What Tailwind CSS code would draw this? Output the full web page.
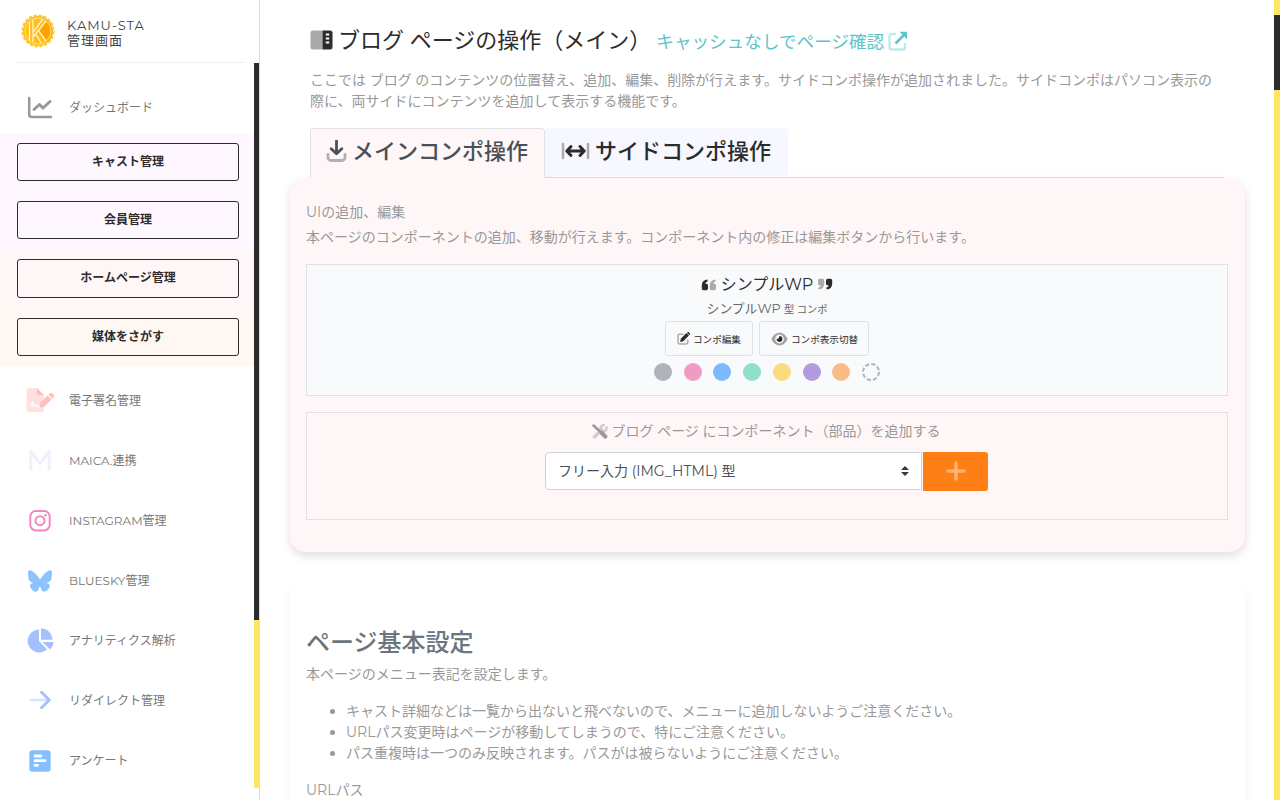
<!DOCTYPE html>
<html lang="ja">
<head>
  <meta charset="UTF-8">
  <meta name="viewport" content="width=device-width, initial-scale=1">
  <title>KAMU-STA 管理画面</title>
  <script src="https://cdn.jsdelivr.net/npm/@tailwindcss/browser@4"></script>
</head>
<body class="flex h-screen overflow-hidden bg-white font-[Montserrat,Inter,'Noto_Sans_CJK_JP',sans-serif] text-sm leading-[21px] text-[#999]">

  <!-- Sidebar -->
  <aside class="relative h-full w-[260px] shrink-0 overflow-hidden border-r border-[#ddd] bg-white">
    <div class="mr-[15px] ml-[15px] flex h-[63px] items-center gap-3 border-b border-[#eee] pl-[6px]">
      <svg class="h-[34px] w-[34px] shrink-0" viewBox="0 0 34 34">
        <circle cx="17" cy="17" r="15.600" fill="none" stroke="#ffcf3d" stroke-width="2" stroke-dasharray="3.400 1.500"/>
        <circle cx="17" cy="17" r="15" fill="#ffbd1c"/>
        <path d="M18 17L26 6a14 14 0 0 1 0 22Z" fill="#ffa200"/>
        <circle cx="17" cy="17" r="13" fill="none" stroke="#ffe58a" stroke-width="1"/>
        <path d="M8.500 8v18.500M12 6v22M12 18.500L21.500 5.500M12.500 22.500L25 7M14.500 19.500l5.500 9.500M17.500 16.500l7.500 10.500" fill="none" stroke="#fff3bf" stroke-width="1.400"/>
      </svg>
      <div class="pt-[3px] text-[13px] leading-[15px] tracking-[1px] text-[#444]">
        <div>KAMU-STA</div>
        <div>管理画面</div>
      </div>
    </div>

    <nav class="text-xs text-[#777]">
      <a class="mt-[14px] flex h-[60px] items-center gap-[15px] pl-[26px]">
        <svg class="mt-[2px] h-7 w-7" viewBox="0 0 28 28" fill="none" stroke="#999" stroke-width="2.500" stroke-linecap="round" stroke-linejoin="round">
          <path d="M3.200 4v16.500q0 2.500 2.500 2.500H25"/>
          <path d="M8 15.500l5.500-5 3.500 3.500L24 7.500" stroke-width="3"/>
        </svg>
        <span class="mt-[2px]">ダッシュボード</span>
      </a>

      <div class="mt-[-4px] font-bold text-[#2c2c2c]">
        <div class="h-[117px] bg-[#fef7ff] px-[17px] pt-[10px]">
          <button class="block h-[38px] w-[222px] rounded-[3px] border border-[#2c2c2c] font-bold">キャスト管理</button>
          <button class="mt-5 block h-[38px] w-[222px] rounded-[3px] border border-[#2c2c2c] font-bold">会員管理</button>
        </div>
        <div class="h-[58px] bg-[#fff6f7] px-[17px] pt-[9px]">
          <button class="block h-[39px] w-[222px] rounded-[3px] border border-[#2c2c2c] pb-px font-bold">ホームページ管理</button>
        </div>
        <div class="h-[58px] bg-[#fff7f2] px-[17px] pt-[10px]">
          <button class="block h-[38px] w-[222px] rounded-[3px] border border-[#2c2c2c] font-bold">媒体をさがす</button>
        </div>
      </div>

      <a class="mt-[4px] flex h-[60px] items-center gap-[15px] pl-[26px]">
        <svg class="h-7 w-7" viewBox="0 0 28 28">
          <path d="M3.500 2H11l7 7v14a3 3 0 0 1-3 3H3.500a3 3 0 0 1-3-3V5a3 3 0 0 1 3-3Z" fill="#ffdfdf"/>
          <path d="M11 2l7 7h-5.500a1.500 1.500 0 0 1-1.500-1.500Z" fill="#ffbfbf"/>
          <path d="M14.500 16.500l7-7 4 4-7 7-5 1Z" fill="#ffbfbf"/>
          <path d="M22.500 8.500l.500-.500a2.600 2.600 0 0 1 4 4l-.700.700Z" fill="#ffbfbf"/>
          <path d="M4 20.500l2.500-4 1 4 2.500-2 1 2h3" fill="none" stroke="#fff" stroke-width="1.300"/>
        </svg>
        <span class="mt-[2px]">電子署名管理</span>
      </a>
      <a class="flex h-[60px] items-center gap-[15px] pl-[26px]">
        <svg class="h-7 w-7" viewBox="0 0 28 28" fill="none" stroke="#f1f0ff" stroke-width="3.200" stroke-linecap="round" stroke-linejoin="round">
          <path d="M4.800 23.500V5.500L14 17.500l9.200-12v18"/>
        </svg>
        <span class="mt-[2px]">MAICA.連携</span>
      </a>
      <a class="flex h-[60px] items-center gap-[15px] pl-[26px]">
        <svg class="h-7 w-7" viewBox="0 0 28 28" fill="none" stroke="#f288bd" stroke-width="2">
          <rect x="4.300" y="5" width="19.400" height="19.400" rx="5.500"/>
          <circle cx="14" cy="14.700" r="4.500"/>
          <circle cx="19.500" cy="9.200" r="1.300" fill="#f288bd" stroke="none"/>
        </svg>
        <span class="mt-[2px]">INSTAGRAM管理</span>
      </a>
      <a class="flex h-[60px] items-center gap-[15px] pl-[26px]">
        <svg class="mt-[2px] h-7 w-7 p-[2px]" viewBox="0 0 24 24" fill="#8cc2ff">
          <path d="M12 10.800c-1.087-2.114-4.046-6.053-6.798-7.995C2.566.944 1.561 1.266.902 1.565.139 1.908 0 3.080 0 3.768c0 .69.378 5.650.624 6.479.815 2.736 3.713 3.660 6.383 3.364-3.912.58-7.387 2.005-2.830 7.078 5.013 5.190 6.870-1.113 7.823-4.308.953 3.195 2.050 9.271 7.733 4.308 4.267-4.308 1.172-6.498-2.740-7.078 2.670.297 5.568-.628 6.383-3.364.246-.828.624-5.790.624-6.478 0-.69-.139-1.861-.902-2.206-.659-.298-1.664-.62-4.300 1.240C16.046 4.748 13.087 8.687 12 10.800Z"/>
        </svg>
        <span class="mt-[2px]">BLUESKY管理</span>
      </a>
      <a class="flex h-[60px] items-center gap-[15px] pl-[26px]">
        <svg class="h-7 w-7" viewBox="0 0 28 28" fill="#a5c0ff">
          <path d="M13 3.600V15l8 8.200A11.400 11.400 0 1 1 13 3.600Z"/>
          <path d="M15 2.600A11.500 11.500 0 0 1 26.500 13.700H15Z"/>
          <path d="M16.500 16h11.200a11.500 11.500 0 0 1-3.700 7.500Z"/>
        </svg>
        <span class="mt-[2px]">アナリティクス解析</span>
      </a>
      <a class="flex h-[60px] items-center gap-[15px] pl-[26px]">
        <svg class="h-7 w-7" viewBox="0 0 28 28" fill="none" stroke-linecap="round" stroke-linejoin="round" stroke-width="2.800">
          <path d="M5 14h18" stroke="#d6e2ff" stroke-width="2.500"/>
          <path d="M15.500 6.200L23.300 14l-7.800 7.800" stroke="#a5c0ff"/>
        </svg>
        <span class="mt-[2px]">リダイレクト管理</span>
      </a>
      <a class="flex h-[60px] items-center gap-[15px] pl-[26px]">
        <svg class="h-7 w-7" viewBox="0 0 28 28">
          <rect x="3.300" y="4.300" width="21.400" height="21.400" rx="3" fill="#85bfff"/>
          <path d="M9 10h6M9 14.700h10M9 19.300h2.500" stroke="#fff" stroke-width="2.800" stroke-linecap="round"/>
        </svg>
        <span class="mt-[2px]">アンケート</span>
      </a>
    </nav>

    <!-- Sidebar scrollbar -->
    <div class="absolute top-[63px] -right-px h-[725px] w-[6px] bg-[#ffe564]">
      <div class="h-[557px] bg-[#2c2c2c]"></div>
    </div>
  </aside>

  <!-- Main -->
  <main class="h-full w-[1014px] shrink-0 overflow-hidden pl-[30px]">
    <div class="px-5 pt-[22px]">
      <div class="flex h-9 items-center">
        <svg class="mr-[5px] h-[22px] w-[23px]" viewBox="0 0 23 22">
          <path d="M3 1.500h9.500v19H3A2.500 2.500 0 0 1 .500 18V4A2.500 2.500 0 0 1 3 1.500Z" fill="#aaa"/>
          <path d="M12.500 1.500H20A2.500 2.500 0 0 1 22.500 4v14a2.500 2.500 0 0 1-2.500 2.500h-7.500Z" fill="#2c2c2c"/>
          <path d="M15.800 5.500h3.400M15.800 9.500h3.400M15.800 13.500h3.400" stroke="#fff" stroke-width="2"/>
        </svg>
        <h1 class="text-[22px] whitespace-nowrap text-[#2c2c2c]">ブログ ページの操作（メイン）</h1>
        <a class="mt-[2px] ml-[5px] flex items-center text-[17.600px] whitespace-nowrap text-[#5cc5c9]">キャッシュなしでページ確認
          <svg class="ml-1 h-5 w-5" viewBox="0 0 20 20" fill="none">
            <path d="M8 3H3.500A2 2 0 0 0 1.500 5v11.500a2 2 0 0 0 2 2H15a2 2 0 0 0 2-2V12" stroke="#bee8e9" stroke-width="2.300"/>
            <path d="M7.500 12.500L17 3" stroke="#5cc5c9" stroke-width="2.500"/>
            <path d="M11.500.800H19v7.500Z" fill="#5cc5c9"/>
          </svg>
        </a>
      </div>
      <p class="mt-3 w-[914px]">ここでは ブログ のコンテンツの位置替え、追加、編集、削除が行えます。サイドコンポ操作が追加されました。サイドコンポはパソコン表示の際に、両サイドにコンテンツを追加して表示する機能です。</p>

      <div class="mt-4 flex h-[50px] w-[914px] border-b border-[#dee2e6] text-[22px] font-medium">
        <div class="flex h-[50px] w-[235px] items-center rounded-t border border-b-0 border-[#dee2e6] bg-[#fff6f7] pb-[5px] pl-[15px] text-[#495057]">
          <svg class="mr-[5px] h-[22px] w-[21px]" viewBox="0 0 21 22" fill="none" stroke-linecap="round" stroke-linejoin="round">
            <path d="M2 14.500v3a3 3 0 0 0 3 3h11a3 3 0 0 0 3-3v-3" stroke="#b0b0b3" stroke-width="2.800"/>
            <path d="M10.500 1v12M5.200 8.800l5.300 5 5.300-5" stroke="#495057" stroke-width="2.800"/>
          </svg>
          <span>メインコンポ操作</span>
        </div>
        <div class="flex h-[49px] w-[243px] items-center rounded-t bg-[#f6f7ff] pb-[3px] pl-[16px] text-[#2c2c2c]">
          <svg class="mr-[5px] h-5 w-[29px]" viewBox="0 0 29 20" fill="none" stroke-linecap="round" stroke-linejoin="round">
            <path d="M2 3v14M27 3v14" stroke="#aaaab0" stroke-width="2.500"/>
            <path d="M6.500 10h16M10 5.500L5.800 10l4.200 4.500M19 5.500l4.200 4.500-4.200 4.500" stroke="#2c2c2c" stroke-width="3"/>
          </svg>
          <span>サイドコンポ操作</span>
        </div>
      </div>
    </div>

    <section class="h-[374px] w-[955px] rounded-2xl bg-[#fff6f7] px-4 pt-[24px] shadow-[0_4px_10px_rgba(0,0,0,0.13)]">
      <p>UIの追加、編集</p>
      <p class="mt-1">本ページのコンポーネントの追加、移動が行えます。コンポーネント内の修正は編集ボタンから行います。</p>

      <div class="mt-[16px] flex h-[132px] w-[922px] flex-col items-center border border-[#dee2e6] bg-[#f8fafc] pt-[9px]">
        <div class="flex h-[21px] items-center gap-1 text-base text-[#2c2c2c]">
          <svg class="h-4 w-4" viewBox="0 0 16 16">
            <path d="M6.500 2.500v2q-2 .4-2.200 2.300H5.500A1.500 1.500 0 0 1 7 8.300v3.200a1.700 1.700 0 0 1-1.700 1.700H2.500A1.700 1.700 0 0 1 .800 11.500V8Q1 3 6.500 2.500Z" fill="#2c2c2c"/>
            <path d="M14.500 2.500v2q-2 .4-2.200 2.300h1.200A1.500 1.500 0 0 1 15 8.300v3.200a1.700 1.700 0 0 1-1.700 1.700h-2.800a1.700 1.700 0 0 1-1.700-1.700V8Q9 3 14.500 2.500Z" fill="#aaa"/>
          </svg>
          <span>シンプルWP</span>
          <svg class="mb-[2px] h-4 w-4 rotate-180" viewBox="0 0 16 16">
            <path d="M6.500 2.500v2q-2 .4-2.200 2.300H5.500A1.500 1.500 0 0 1 7 8.300v3.200a1.700 1.700 0 0 1-1.700 1.700H2.500A1.700 1.700 0 0 1 .800 11.500V8Q1 3 6.500 2.500Z" fill="#2c2c2c"/>
            <path d="M14.500 2.500v2q-2 .4-2.200 2.300h1.200A1.500 1.500 0 0 1 15 8.300v3.200a1.700 1.700 0 0 1-1.700 1.700h-2.800a1.700 1.700 0 0 1-1.700-1.700V8Q9 3 14.500 2.500Z" fill="#aaa"/>
          </svg>
        </div>
        <div class="mt-[3px] h-[21px] text-[12.800px] text-[#666]">シンプルWP <span class="text-[10.200px]">型 コンポ</span></div>
        <div class="mt-[2px] flex gap-[6px] text-[9.600px] text-[#2c2c2c]">
          <button class="flex h-[35px] w-[88px] items-center rounded-[3px] border border-[#dee2e6] pl-[11px]">
            <svg class="mr-[3px] h-[13px] w-[13px]" viewBox="0 0 12 12">
              <path d="M6 2H2.500A1.500 1.500 0 0 0 1 3.500v6A1.500 1.500 0 0 0 2.500 11h6A1.500 1.500 0 0 0 10 9.500V7" fill="none" stroke="#aaa" stroke-width="1.400"/>
              <path d="M3.500 6.200L8.700 1l2.300 2.300-5.200 5.200-2.900.700ZM9.200.600a1.600 1.600 0 0 1 2.300 2.300Z" fill="#2c2c2c"/>
            </svg>
            <span class="mt-px">コンポ編集</span>
          </button>
          <button class="flex h-[35px] w-[110px] items-center rounded-[3px] border border-[#dee2e6] pl-[11px]">
            <svg class="mr-[3px] h-[14px] w-[17px]" viewBox="0 0 17 14">
              <path d="M.3 7Q3.500.500 8.500.500T16.700 7Q13.500 13.500 8.500 13.500T.3 7Z" fill="#a3a3a6"/>
              <circle cx="8.500" cy="7" r="4.400" fill="#f8fafc"/>
              <path d="M8.500 4.100a2.900 2.900 0 1 1-2.900 2.700q2.700.7 2.900-2.700Z" fill="#2c2c2c"/>
            </svg>
            <span class="mt-px">コンポ表示切替</span>
          </button>
        </div>
        <div class="mt-[7px] flex gap-[11.700px]">
          <span class="h-[18px] w-[18px] rounded-full bg-[#b0b3ba]"></span>
          <span class="h-[18px] w-[18px] rounded-full bg-[#ef9cc4]"></span>
          <span class="h-[18px] w-[18px] rounded-full bg-[#7db9ff]"></span>
          <span class="h-[18px] w-[18px] rounded-full bg-[#8ee0c6]"></span>
          <span class="h-[18px] w-[18px] rounded-full bg-[#fbdb7f]"></span>
          <span class="h-[18px] w-[18px] rounded-full bg-[#b39cde]"></span>
          <span class="h-[18px] w-[18px] rounded-full bg-[#fabc87]"></span>
          <svg class="h-[18px] w-[18px]" viewBox="0 0 18 18">
            <circle cx="9" cy="9" r="8" fill="none" stroke="#b0b3ba" stroke-width="2" stroke-dasharray="4.200 2.083"/>
          </svg>
        </div>
      </div>

      <div class="mt-4 h-[108px] w-[922px] border border-[#dee2e6] pt-[8px]">
        <div class="flex h-[21px] items-center justify-center gap-[3px] pr-px">
          <svg class="h-[15px] w-[16px]" viewBox="0 0 16 15" fill="none" stroke-linecap="round">
            <path d="M2.500 12.800L10 5.800" stroke="#d0cccc" stroke-width="3.300"/>
            <path d="M14.500 3.500A3 3 0 1 1 11.800 1.200" stroke="#d0cccc" stroke-width="2.600"/>
            <path d="M1.500 1.500L8 7.500" stroke="#999" stroke-width="2.500"/>
            <path d="M9.800 9l3.500 3.500" stroke="#999" stroke-width="4.200"/>
          </svg>
          <span>ブログ ページ にコンポーネント（部品）を追加する</span>
        </div>
        <div class="mt-[10px] ml-[238px] flex gap-px">
          <div class="flex h-[38px] w-[377px] items-center justify-between rounded-l border border-[#ced4da] bg-white pr-3 pl-[12px] text-[#495057]">
            <span>フリー入力 (IMG_HTML) 型</span>
            <svg class="h-[10px] w-2" viewBox="0 0 8 10" fill="#343a40"><path d="M4 0L8 4H0ZM0 6h8L4 10Z"/></svg>
          </div>
          <button class="flex h-[39px] w-[65px] items-center justify-center rounded-r-[3px] bg-[#ff7f17] pb-px">
            <svg class="h-5 w-5" viewBox="0 0 20 20" stroke="#ffb273" stroke-width="3.500" stroke-linecap="round"><path d="M10 2v16M2 10h16"/></svg>
          </button>
        </div>
      </div>
    </section>

    <section class="mt-6 h-[400px] w-[955px] rounded-2xl bg-white px-4 pt-[49px] shadow-[0_8px_10px_rgba(0,0,0,0.06)]">
      <h2 class="text-2xl leading-9 font-medium text-[#6c757d]">ページ基本設定</h2>
      <p class="mt-[3px]">本ページのメニュー表記を設定します。</p>
      <ul class="mt-4 list-disc pl-10">
        <li>キャスト詳細などは一覧から出ないと飛べないので、メニューに追加しないようご注意ください。</li>
        <li>URLパス変更時はページが移動してしまうので、特にご注意ください。</li>
        <li>パス重複時は一つのみ反映されます。パスがは被らないようにご注意ください。</li>
      </ul>
      <p class="mt-4">URLパス</p>
    </section>
  </main>

  <!-- Page scrollbar -->
  <div class="fixed top-0 right-0 h-full w-[6px] bg-[#ffe564] pt-[15px]">
    <div class="h-[75px] bg-[#2c2c2c]"></div>
  </div>

</body>
</html>
